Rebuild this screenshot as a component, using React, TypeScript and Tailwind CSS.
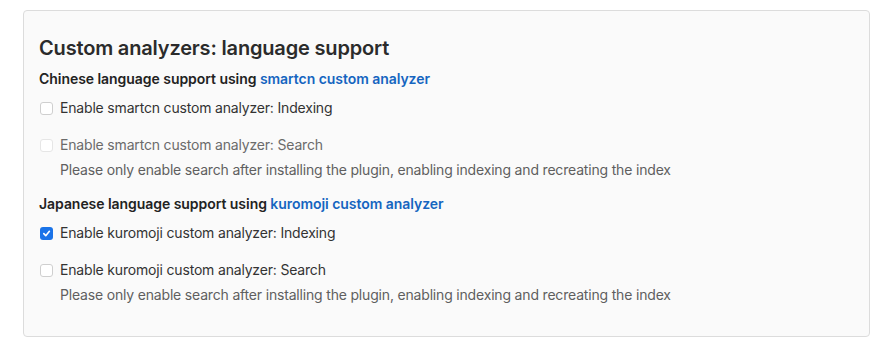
import React from 'react';

type Option = { label: string; checked?: boolean; disabled?: boolean; help?: string };

const HELP = 'Please only enable search after installing the plugin, enabling indexing and recreating the index';

const sections: { lang: string; link: string; options: Option[] }[] = [
  {
    lang: 'Chinese',
    link: 'smartcn custom analyzer',
    options: [
      { label: 'Enable smartcn custom analyzer: Indexing' },
      { label: 'Enable smartcn custom analyzer: Search', disabled: true, help: HELP },
    ],
  },
  {
    lang: 'Japanese',
    link: 'kuromoji custom analyzer',
    options: [
      { label: 'Enable kuromoji custom analyzer: Indexing', checked: true },
      { label: 'Enable kuromoji custom analyzer: Search', help: HELP },
    ],
  },
];

const Checkbox: React.FC<{ checked?: boolean; disabled?: boolean }> = ({ checked, disabled }) =>
  checked ? (
    <span className="flex h-[13px] w-[13px] shrink-0 items-center justify-center rounded-[3px] bg-[#1a73e8]">
      <svg width="9" height="9" viewBox="0 0 10 10" fill="none">
        <path d="M2 5.2 L4.2 7.4 L8.2 2.6" stroke="white" strokeWidth="1.8" strokeLinecap="round" strokeLinejoin="round" />
      </svg>
    </span>
  ) : (
    <span
      className={`h-[13px] w-[13px] shrink-0 rounded-[3px] border bg-white ${
        disabled ? 'border-[#e6e6e6]' : 'border-[#cfcfcf]'
      }`}
    />
  );

const App: React.FC = () => {
  return (
    <div className="min-h-[346px] bg-white pl-[23px] pr-[13px] pt-[10px] font-['Inter',sans-serif] text-[#333]">
      <div className="h-[327px] rounded-[4px] border border-[#dcdcdc] bg-[#fafafa] pl-[15px] pt-[23px]">
        <h2 className="text-[20px] font-semibold leading-[28px] tracking-[-0.17px] text-[#2b2b2b]">
          Custom analyzers: language support
        </h2>

        {sections.map((s, i) => (
          <div key={s.lang} className={i === 0 ? 'mt-[7px]' : 'mt-[14px]'}>
            <p className="text-[14px] font-semibold leading-[20px] tracking-[-0.05px] text-[#222]">
              {s.lang} language support using{' '}
              <a className="text-[#1565c0]" href="#">
                {s.link}
              </a>
            </p>
            {s.options.map((o, j) => (
              <div key={o.label} className={j === 0 ? 'mt-[9px]' : 'mt-[17px]'}>
                <label className="flex items-center gap-[7px] pl-[1px]">
                  <Checkbox checked={o.checked} disabled={o.disabled} />
                  <span
                    className={`text-[14px] leading-[20px] tracking-[-0.18px] ${
                      o.disabled ? 'text-[#6b6b6b]' : 'text-[#333]'
                    }`}
                  >
                    {o.label}
                  </span>
                </label>
                {o.help && (
                  <p className="mt-[5px] pl-[21px] text-[14px] leading-[20px] tracking-[-0.18px] text-[#5f5f5f]">
                    {o.help}
                  </p>
                )}
              </div>
            ))}
          </div>
        ))}
      </div>
    </div>
  );
};

export default App;
